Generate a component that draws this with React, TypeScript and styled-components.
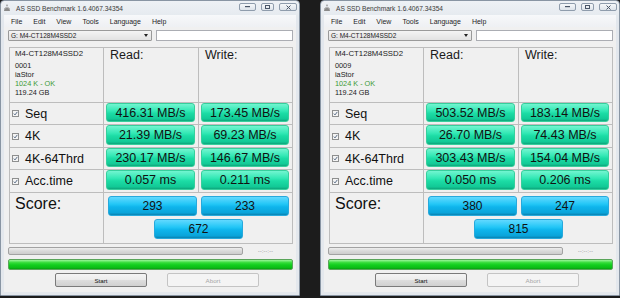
import React from 'react';
import styled, { createGlobalStyle } from 'styled-components';

const GlobalStyle = createGlobalStyle`
	body {
		margin: 0;
		background: #1c1c1c;
		font-family: 'Liberation Sans', Arial, sans-serif;
	}
`;

interface Result {
	label: string;
	read: string;
	write: string;
}

interface BenchData {
	firmware: string;
	results: Result[];
	scores: [string, string, string];
}

const DRIVE = 'M4-CT128M4SSD2';

const runs: BenchData[] = [
	{
		firmware: '0001',
		results: [
			{ label: 'Seq', read: '416.31 MB/s', write: '173.45 MB/s' },
			{ label: '4K', read: '21.39 MB/s', write: '69.23 MB/s' },
			{ label: '4K-64Thrd', read: '230.17 MB/s', write: '146.67 MB/s' },
			{ label: 'Acc.time', read: '0.057 ms', write: '0.211 ms' },
		],
		scores: ['293', '233', '672'],
	},
	{
		firmware: '0009',
		results: [
			{ label: 'Seq', read: '503.52 MB/s', write: '183.14 MB/s' },
			{ label: '4K', read: '26.70 MB/s', write: '74.43 MB/s' },
			{ label: '4K-64Thrd', read: '303.43 MB/s', write: '154.04 MB/s' },
			{ label: 'Acc.time', read: '0.050 ms', write: '0.206 ms' },
		],
		scores: ['380', '247', '815'],
	},
];

const Screen = styled.div`
	display: flex;
	gap: 20px;
	width: 620px;
	height: 298px;
	overflow: hidden;
`;

const Window = styled.div`
	width: 300px;
	height: 296px;
	box-sizing: border-box;
	border: 1px solid #8995a3;
	border-radius: 4px 4px 0 0;
	background: linear-gradient(#eef1f5, #e2e7ed 20px, #e4e8ed);
	display: flex;
	flex-direction: column;
`;

const TitleBar = styled.div`
	height: 14px;
	display: flex;
	align-items: center;
	padding: 0 2px 0 2px;
	flex-shrink: 0;
`;

const Title = styled.span`
	font-size: 6.6px;
	color: #3a3a3a;
	margin-left: 5px;
	white-space: nowrap;
`;

const Controls = styled.div`
	margin-left: auto;
	display: flex;
	gap: 5px;
	align-self: flex-start;
	margin-top: 2px;
`;

const CtrlButton = styled.div<{ $w: number }>`
	width: ${p => p.$w}px;
	height: 8px;
	box-sizing: border-box;
	border: 1px solid #8f9cac;
	border-radius: 2px;
	background: linear-gradient(#f6f8fa, #dde3ea);
	display: flex;
	align-items: center;
	justify-content: center;
`;

const Client = styled.div`
	flex: 1;
	margin: 0 3px 3px 3px;
	padding: 0 3px 0 4px;
	background: #f0f0f0;
	display: flex;
	flex-direction: column;
`;

const MenuBar = styled.div`
	height: 12px;
	display: flex;
	align-items: center;
	gap: 11px;
	padding-left: 3px;
	font-size: 7px;
	color: #1e1e1e;
	margin: 0 -3px 0 -4px;
	padding-left: 7px;
	background: linear-gradient(#f7f8fa, #eef0f3);
`;

const DriveRow = styled.div`
	display: flex;
	gap: 4px;
	margin-top: 3px;
	height: 11px;
`;

const Combo = styled.div`
	width: 144px;
	box-sizing: border-box;
	border: 1px solid #9a9a9a;
	border-radius: 1px;
	background: linear-gradient(#f4f4f4, #e2e2e2);
	display: flex;
	align-items: center;
	padding: 0 3px 0 2px;
	font-size: 6.5px;
	color: #222;
`;

const Arrow = styled.span`
	margin-left: auto;
	width: 0;
	height: 0;
	border-left: 2.5px solid transparent;
	border-right: 2.5px solid transparent;
	border-top: 3px solid #222;
`;

const TextBox = styled.div`
	flex: 1;
	box-sizing: border-box;
	border: 1px solid #abadb3;
	background: #fff;
`;

const Table = styled.div`
	margin: 6px 0 0 1px;
	display: grid;
	grid-template-columns: 93px 94px 93px;
	grid-template-rows: 54px 21px 22px 21px 22px 50px;
	gap: 1px;
	padding: 1px;
	width: 284px;
	box-sizing: border-box;
	background: #bdbdbd;
`;

const Cell = styled.div`
	background: #f0f0f0;
	min-width: 0;
`;

const InfoCell = styled(Cell)`
	padding: 1px 5px 0 5px;
	color: #222;
`;

const Model = styled.div`
	font-size: 7.8px;
	line-height: 10px;
	margin-bottom: 2px;
`;

const InfoLine = styled.div<{ $ok?: boolean }>`
	font-size: 7.3px;
	line-height: 9px;
	color: ${p => (p.$ok ? '#3d9b35' : '#222')};
`;

const HeadCell = styled(Cell)`
	padding-left: 6px;
	font-size: 12.5px;
	line-height: 14px;
	color: #1a1a1a;
`;

const LabelCell = styled(Cell)`
	display: flex;
	align-items: center;
	padding-left: 2px;
	gap: 6px;
	font-size: 12.5px;
	color: #111;
`;

const ValueCell = styled(Cell)`
	padding: 0 3px 2px 2px;
	display: flex;
`;

const ValueBox = styled.div<{ $blue?: boolean }>`
	flex: 1;
	box-sizing: border-box;
	border-radius: 3px;
	border: 1px solid ${p => (p.$blue ? '#27a9dc' : '#36cf9c')};
	background: ${p =>
		p.$blue
			? 'linear-gradient(#62d9ff 0%, #22c6f6 40%, #0fb5ec 55%, #0aa4da 88%, #0a82b0 100%)'
			: 'linear-gradient(#72f5d0 0%, #33e8b5 40%, #1cdca5 55%, #12c996 88%, #0ea57b 100%)'};
	display: flex;
	align-items: center;
	justify-content: center;
	font-size: ${p => (p.$blue ? '12px' : '12.5px')};
	color: #111;
	white-space: nowrap;
`;

const ScoreLabel = styled(Cell)`
	padding: 2px 0 0 5px;
	font-size: 16px;
	line-height: 18px;
	color: #111;
`;

const ScoreCell = styled(Cell)`
	grid-column: 2 / 4;
	padding: 3px 4px 0 4px;
	display: grid;
	grid-template-columns: 89px 88px;
	grid-template-rows: 20px 20px;
	column-gap: 4px;
	row-gap: 3px;
`;

const TotalBox = styled(ValueBox)`
	grid-column: 1 / 3;
	justify-self: center;
	width: 89px;
`;

const ProgressRow = styled.div`
	display: flex;
	align-items: center;
	margin-top: 3px;
	height: 8px;
`;

const Progress = styled.div`
	width: 235px;
	height: 8px;
	box-sizing: border-box;
	border: 1px solid #a2a2a2;
	border-radius: 2px;
	background: linear-gradient(#eeeeee, #d9d9d9 50%, #cdcdcd);
`;

const Timer = styled.span`
	margin-left: 15px;
	font-size: 5px;
	letter-spacing: 0.3px;
	color: #8a8a8a;
`;

const GreenBar = styled.div`
	margin-top: 4px;
	height: 11px;
	box-sizing: border-box;
	border: 1px solid #5aa55a;
	border-radius: 2px;
	background: linear-gradient(#9af59a 0%, #34dc38 30%, #12cf1e 55%, #0cbd16 85%, #08a010 100%);
`;

const ButtonRow = styled.div`
	display: flex;
	gap: 20px;
	margin-top: 3px;
	padding-left: 47px;
`;

const Button = styled.div<{ $disabled?: boolean }>`
	width: 92px;
	height: 14px;
	box-sizing: border-box;
	border: 1px solid ${p => (p.$disabled ? '#c4c4c4' : '#7a7a7a')};
	border-radius: 2px;
	background: ${p =>
		p.$disabled
			? '#f4f4f4'
			: 'linear-gradient(#f4f4f4, #ebebeb 50%, #dddddd 51%, #d0d0d0)'};
	display: flex;
	align-items: center;
	justify-content: center;
	font-size: 6.2px;
	color: ${p => (p.$disabled ? '#a6a6a6' : '#111')};
`;

const AppIcon = () => (
	<svg width='8' height='8' viewBox='0 0 8 8'>
		<path d='M1 7 L1.6 4.2 Q4 1.2 6.4 4.2 L7 7 Z' fill='#8a8a8a' />
		<path d='M2 4.3 Q4 2.2 6 4.3' stroke='#c8c8c8' strokeWidth='0.7' fill='none' />
		<rect x='3.5' y='0.6' width='1' height='1.6' fill='#6f6f6f' />
	</svg>
);

const CheckBox = () => (
	<svg width='7' height='7' viewBox='0 0 7 7'>
		<rect x='0.5' y='0.5' width='6' height='6' fill='#f4f4f4' stroke='#8e8f8f' />
		<path d='M1.8 3.6 L3 4.9 L5.3 1.9' stroke='#4a5f7a' strokeWidth='0.9' fill='none' />
	</svg>
);

const Bench = ({ data }: { data: BenchData }) => (
	<Window>
		<TitleBar>
			<AppIcon />
			<Title>AS SSD Benchmark 1.6.4067.34354</Title>
			<Controls>
				<CtrlButton $w={17}>
					<svg width='5' height='2'>
						<rect width='5' height='1.2' fill='#4a5668' />
					</svg>
				</CtrlButton>
				<CtrlButton $w={13}>
					<svg width='5' height='4'>
						<rect x='0.5' y='0.5' width='4' height='3' fill='none' stroke='#4a5668' />
					</svg>
				</CtrlButton>
				<CtrlButton $w={18}>
					<svg width='5' height='5'>
						<path d='M0.5 0.5 L4.5 4.5 M4.5 0.5 L0.5 4.5' stroke='#4a5668' strokeWidth='1' />
					</svg>
				</CtrlButton>
			</Controls>
		</TitleBar>
		<Client>
			<MenuBar>
				<span>File</span>
				<span>Edit</span>
				<span>View</span>
				<span>Tools</span>
				<span>Language</span>
				<span>Help</span>
			</MenuBar>
			<DriveRow>
				<Combo>
					G: {DRIVE}
					<Arrow />
				</Combo>
				<TextBox />
			</DriveRow>
			<Table>
				<InfoCell>
					<Model>{DRIVE}</Model>
					<InfoLine>{data.firmware}</InfoLine>
					<InfoLine>iaStor</InfoLine>
					<InfoLine $ok>1024 K - OK</InfoLine>
					<InfoLine>119.24 GB</InfoLine>
				</InfoCell>
				<HeadCell>Read:</HeadCell>
				<HeadCell>Write:</HeadCell>
				{data.results.map(r => (
					<React.Fragment key={r.label}>
						<LabelCell>
							<CheckBox />
							{r.label}
						</LabelCell>
						<ValueCell>
							<ValueBox>{r.read}</ValueBox>
						</ValueCell>
						<ValueCell>
							<ValueBox>{r.write}</ValueBox>
						</ValueCell>
					</React.Fragment>
				))}
				<ScoreLabel>Score:</ScoreLabel>
				<ScoreCell>
					<ValueBox $blue>{data.scores[0]}</ValueBox>
					<ValueBox $blue>{data.scores[1]}</ValueBox>
					<TotalBox $blue>{data.scores[2]}</TotalBox>
				</ScoreCell>
			</Table>
			<ProgressRow>
				<Progress />
				<Timer>--:--:--</Timer>
			</ProgressRow>
			<GreenBar />
			<ButtonRow>
				<Button>Start</Button>
				<Button $disabled>Abort</Button>
			</ButtonRow>
		</Client>
	</Window>
);

export default function App() {
	return (
		<>
			<GlobalStyle />
			<Screen>
				{runs.map(run => (
					<Bench key={run.firmware} data={run} />
				))}
			</Screen>
		</>
	);
}
